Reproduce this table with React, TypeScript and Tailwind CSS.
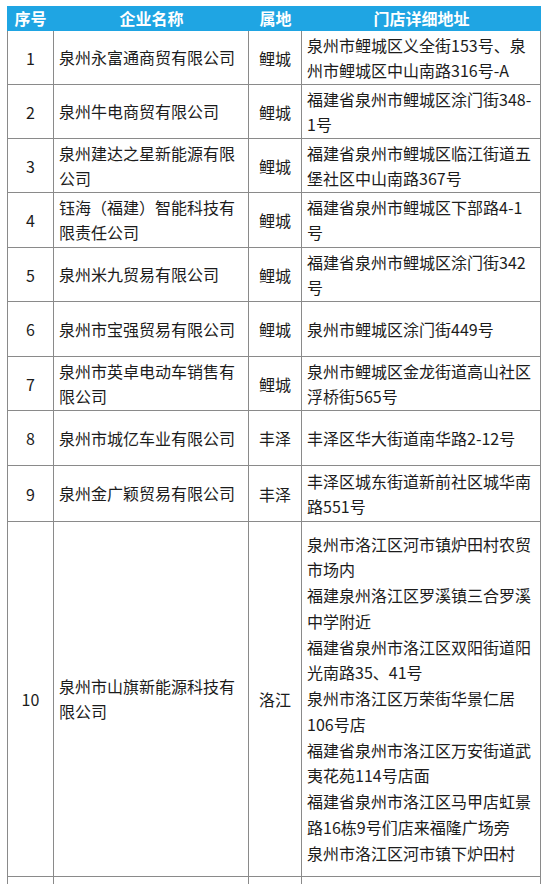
import React from "react"

type Row = {
  no: string
  name: string[]
  area: string
  addr: string[]
  h: string
}

const rows: Row[] = [
  { no: "1", name: ["泉州永富通商贸有限公司"], area: "鲤城", addr: ["泉州市鲤城区义全街153号、泉", "州市鲤城区中山南路316号-A"], h: "h-[54px]" },
  { no: "2", name: ["泉州牛电商贸有限公司"], area: "鲤城", addr: ["福建省泉州市鲤城区涂门街348-", "1号"], h: "h-[54px]" },
  { no: "3", name: ["泉州建达之星新能源有限", "公司"], area: "鲤城", addr: ["福建省泉州市鲤城区临江街道五", "堡社区中山南路367号"], h: "h-[54px]" },
  { no: "4", name: ["钰海（福建）智能科技有", "限责任公司"], area: "鲤城", addr: ["福建省泉州市鲤城区下部路4-1", "号"], h: "h-[55px]" },
  { no: "5", name: ["泉州米九贸易有限公司"], area: "鲤城", addr: ["福建省泉州市鲤城区涂门街342", "号"], h: "h-[54px]" },
  { no: "6", name: ["泉州市宝强贸易有限公司"], area: "鲤城", addr: ["泉州市鲤城区涂门街449号"], h: "h-[55px]" },
  { no: "7", name: ["泉州市英卓电动车销售有", "限公司"], area: "鲤城", addr: ["泉州市鲤城区金龙街道高山社区", "浮桥街565号"], h: "h-[54px]" },
  { no: "8", name: ["泉州市城亿车业有限公司"], area: "丰泽", addr: ["丰泽区华大街道南华路2-12号"], h: "h-[55px]" },
  { no: "9", name: ["泉州金广颖贸易有限公司"], area: "丰泽", addr: ["丰泽区城东街道新前社区城华南", "路551号"], h: "h-[56px]" },
  {
    no: "10",
    name: ["泉州市山旗新能源科技有", "限公司"],
    area: "洛江",
    addr: [
      "泉州市洛江区河市镇炉田村农贸",
      "市场内",
      "福建泉州洛江区罗溪镇三合罗溪",
      "中学附近",
      "福建省泉州市洛江区双阳街道阳",
      "光南路35、41号",
      "泉州市洛江区万荣街华景仁居",
      "106号店",
      "福建省泉州市洛江区万安街道武",
      "夷花苑114号店面",
      "福建省泉州市洛江区马甲店虹景",
      "路16栋9号们店来福隆广场旁",
      "泉州市洛江区河市镇下炉田村",
    ],
    h: "h-[355px]",
  },
  { no: "", name: [], area: "", addr: [], h: "h-[40px]" },
]

const Lines = ({ items, tall }: { items: string[]; tall?: boolean }) => (
  <div className={tall ? "leading-[25.75px]" : "leading-[25px]"}>
    {items.map((t, i) => (
      <div key={i} className="whitespace-nowrap">{t}</div>
    ))}
  </div>
)

export default function App() {
  return (
    <div className="h-[884px] w-[545px] overflow-hidden bg-white pt-[6px] pl-[7px] text-[16px] text-[#1c1c1c] font-['Noto_Sans_CJK_SC','Noto_Sans',sans-serif]">
      <div className="w-[534px]">
        {/* header */}
        <div className="grid h-[25px] grid-cols-[47px_195px_53px_239px] items-center bg-[#1fa5e3] font-bold text-white leading-[25px]">
          <div className="text-center">序号</div>
          <div className="text-center">企业名称</div>
          <div className="text-center">属地</div>
          <div className="text-center">门店详细地址</div>
        </div>

        <div className="border-l border-[#8a8a8a]">
          {rows.map((r, i) => (
            <div key={i} className={`grid grid-cols-[46px_195px_53px_239px] border-b border-[#8a8a8a] ${r.h}`}>
              <div className="flex items-center justify-center border-r border-[#8a8a8a]">{r.no}</div>
              <div className="flex items-center border-r border-[#8a8a8a] pl-[5px]">
                <Lines items={r.name} />
              </div>
              <div className="flex items-center justify-center border-r border-[#8a8a8a]">{r.area}</div>
              <div className="flex items-center border-r border-[#8a8a8a] pl-[5px]">
                <Lines items={r.addr} tall={r.addr.length > 2} />
              </div>
            </div>
          ))}
        </div>
      </div>
    </div>
  )
}
